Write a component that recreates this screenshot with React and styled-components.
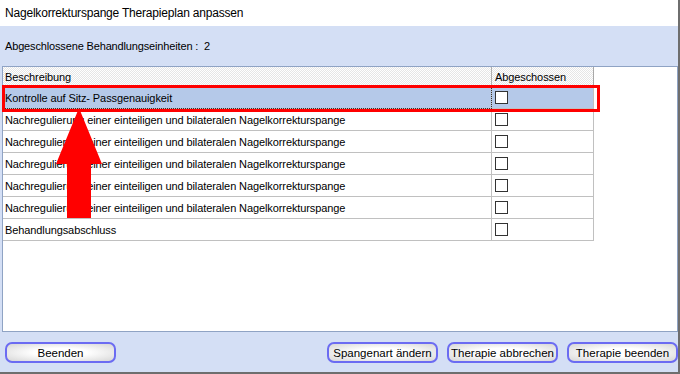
import React from "react";
import styled, { createGlobalStyle } from "styled-components";

const GlobalStyle = createGlobalStyle`
  html, body {
    margin: 0;
    padding: 0;
    background: #ffffff;
  }
  body {
    font-family: "Liberation Sans", Arial, sans-serif;
    color: #000;
  }
`;

const Window = styled.div`
  position: relative;
  width: 680px;
  height: 374px;
  box-sizing: border-box;
  border-right: 2px solid #6e6e6e;
  border-bottom: 2px solid #6e6e6e;
  display: flex;
  flex-direction: column;
  background: #d4dff5;
  overflow: hidden;
`;

const TitleBar = styled.div`
  height: 26px;
  flex: none;
  background: #ffffff;
  display: flex;
  align-items: center;
  padding-left: 5px;
  font-size: 12px;
  letter-spacing: -0.2px;
`;

const InfoLine = styled.div`
  height: 40px;
  flex: none;
  display: flex;
  align-items: center;
  padding-left: 5px;
  font-size: 11px;
  letter-spacing: -0.15px;
`;

const Panel = styled.div`
  flex: none;
  height: 266px;
  margin-left: 2px;
  box-sizing: border-box;
  border: 1px solid #8fa3c4;
  background: #ffffff;
`;

const Grid = styled.div`
  width: 591px;
  display: grid;
  grid-template-columns: 489px 102px;
`;

const HeadCell = styled.div`
  height: 20px;
  box-sizing: border-box;
  display: flex;
  align-items: center;
  padding-left: ${(p) => (p.$right ? "3px" : "2px")};
  font-size: 11px;
  letter-spacing: -0.1px;
  border-right: 1px solid ${(p) => (p.$right ? "#a8a8a8" : "#b0b0b0")};
  border-bottom: 1px solid #c8c8c8;
  background-color: #f6f6f6;
  background-image: repeating-conic-gradient(#e6e6e6 0 25%, #ffffff 0 50%);
  background-size: 2px 2px;
`;

const Cell = styled.div`
  height: 22px;
  box-sizing: border-box;
  display: flex;
  align-items: center;
  padding-left: ${(p) => (p.$check ? "3px" : "2px")};
  font-size: 11px;
  letter-spacing: -0.1px;
  white-space: nowrap;
  overflow: hidden;
  background: ${(p) => (p.$selected ? "#b5c9e9" : "#ffffff")};
  border-right: 1px solid #c0c0c0;
  border-bottom: 1px solid #c0c0c0;
  outline: ${(p) => (p.$focus ? "1px dotted #333" : "none")};
  outline-offset: -1px;
`;

const CheckBox = styled.span`
  width: 13px;
  height: 13px;
  box-sizing: border-box;
  border: 1px solid #333333;
  background: #ffffff;
`;

const Footer = styled.div`
  flex: 1;
  display: flex;
  align-items: flex-start;
  padding: 10px 0 0 5px;
  gap: 9px;
`;

const Spacer = styled.div`
  flex: 1;
`;

const Button = styled.button`
  width: 111px;
  height: 21px;
  box-sizing: border-box;
  border: 2px solid #6b6bf2;
  border-radius: 7px;
  background: radial-gradient(ellipse at center, #ffffff 35%, #e9e9e9 70%, #d6d6d6 100%);
  font-family: "Liberation Sans", Arial, sans-serif;
  font-size: 11.5px;
  color: #000;
  padding: 0;
  display: flex;
  align-items: center;
  justify-content: center;
`;

const Highlight = styled.div`
  position: absolute;
  left: 2px;
  top: 85px;
  width: 598px;
  height: 27px;
  box-sizing: border-box;
  border: 3px solid #ff0000;
  pointer-events: none;
`;

const Arrow = styled.svg`
  position: absolute;
  left: 55px;
  top: 108px;
  pointer-events: none;
`;

const rows = [
  "Kontrolle auf Sitz- Passgenauigkeit",
  "Nachregulierung einer einteiligen und bilateralen Nagelkorrekturspange",
  "Nachregulierung einer einteiligen und bilateralen Nagelkorrekturspange",
  "Nachregulierung einer einteiligen und bilateralen Nagelkorrekturspange",
  "Nachregulierung einer einteiligen und bilateralen Nagelkorrekturspange",
  "Nachregulierung einer einteiligen und bilateralen Nagelkorrekturspange",
  "Behandlungsabschluss",
];

const App = () => {
  return (
    <Window>
      <GlobalStyle />
      <TitleBar>Nagelkorrekturspange Therapieplan anpassen</TitleBar>
      <InfoLine>Abgeschlossene Behandlungseinheiten :&nbsp;&nbsp;2</InfoLine>
      <Panel>
        <Grid>
          <HeadCell>Beschreibung</HeadCell>
          <HeadCell $right>Abgeschossen</HeadCell>
          {rows.map((text, i) => (
            <React.Fragment key={i}>
              <Cell $selected={i === 0} $focus={i === 0}>
                {text}
              </Cell>
              <Cell $selected={i === 0} $check>
                <CheckBox />
              </Cell>
            </React.Fragment>
          ))}
        </Grid>
      </Panel>
      <Footer>
        <Button>Beenden</Button>
        <Spacer />
        <Button>Spangenart ändern</Button>
        <Button>Therapie abbrechen</Button>
        <Button>Therapie beenden</Button>
      </Footer>
      <Highlight />
      <Arrow width="48" height="112" viewBox="0 0 48 112">
        <polygon points="24,0 47,56 36,56 36,110 12,110 12,56 1,56" fill="#ff0000" />
      </Arrow>
    </Window>
  );
};

export default App;
